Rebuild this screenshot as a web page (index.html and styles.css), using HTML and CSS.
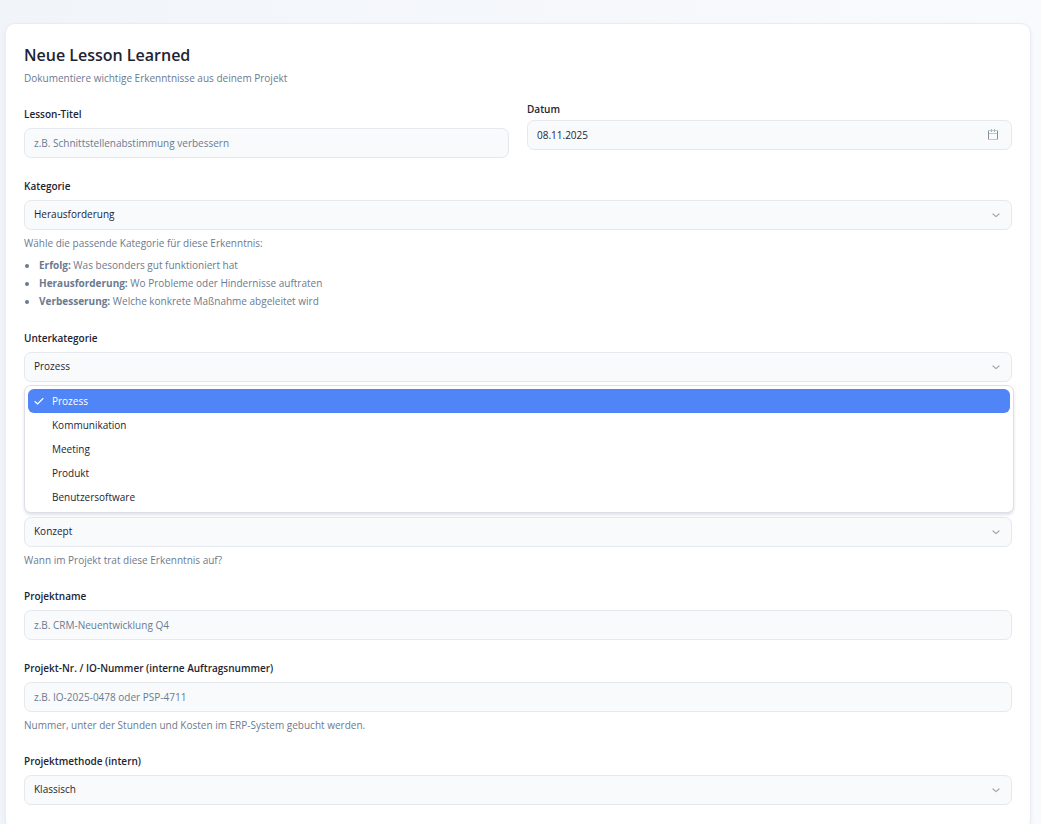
FILE: index.html
```html
<!DOCTYPE html>
<html lang="de">
  <head>
    <meta charset="UTF-8" />
    <meta name="viewport" content="width=device-width, initial-scale=1.0" />
    <title>Neue Lesson Learned</title>
    <link rel="stylesheet" href="styles.css">
  </head>
  <body>
    <svg class="sprite" aria-hidden="true">
      <symbol id="chevron" viewBox="0 0 12 12">
        <path d="M3 5l3 2.6L9 5" fill="none" stroke="currentColor" stroke-width="1.2" stroke-linecap="round" stroke-linejoin="round" />
      </symbol>
    </svg>
    <main class="card">
      <header class="card-header">
        <h1>Neue Lesson Learned</h1>
        <p>Dokumentiere wichtige Erkenntnisse aus deinem Projekt</p>
      </header>
      <form class="lesson-form">
        <div class="row">
          <div class="field">
            <label for="title">Lesson-Titel</label>
            <input type="text" id="title" placeholder="z.B. Schnittstellenabstimmung verbessern" />
          </div>
          <div class="field date-field">
            <label for="date">Datum</label>
            <div class="control">
              <input type="text" id="date" value="08.11.2025" />
              <button type="button" class="calendar-button" aria-label="Kalender">
                <svg width="12" height="12" viewBox="0 0 12 12" fill="none">
                  <path d="M1 1.5h10M1 4.5h10M1 10.5h10" stroke="#b4cdc6" />
                  <path d="M1.5 2v8M10.5 2v8" stroke="#8f8a98" />
                  <path d="M4.5 0v3M7.5 0v3" stroke="#adb3b8" />
                </svg>
              </button>
            </div>
          </div>
        </div>

        <div class="field">
          <label for="category">Kategorie</label>
          <div class="control">
            <select id="category">
              <option>Herausforderung</option>
            </select>
            <svg class="chevron"><use href="#chevron" /></svg>
          </div>
          <p class="hint">Wähle die passende Kategorie für diese Erkenntnis:</p>
          <ul class="hint-list">
            <li><strong>Erfolg:</strong> Was besonders gut funktioniert hat</li>
            <li><strong>Herausforderung:</strong> Wo Probleme oder Hindernisse auftraten</li>
            <li><strong>Verbesserung:</strong> Welche konkrete Maßnahme abgeleitet wird</li>
          </ul>
        </div>

        <div class="field">
          <label for="subcategory">Unterkategorie</label>
          <div class="control">
            <select id="subcategory">
              <option>Prozess</option>
            </select>
            <svg class="chevron"><use href="#chevron" /></svg>
          </div>
          <ul class="menu" role="listbox" aria-label="Unterkategorie">
            <li class="selected" role="option" aria-selected="true">
              <svg class="check" width="10" height="10" viewBox="0 0 10 10" fill="none">
                <path d="M1 5.5L3.5 8 9 2.5" stroke="currentColor" stroke-width="1.1" stroke-linecap="round" stroke-linejoin="round" />
              </svg>
              Prozess
            </li>
            <li role="option">Kommunikation</li>
            <li role="option">Meeting</li>
            <li role="option">Produkt</li>
            <li role="option">Benutzersoftware</li>
          </ul>
          <div class="control">
            <select id="phase" aria-label="Projektphase">
              <option>Konzept</option>
            </select>
            <svg class="chevron"><use href="#chevron" /></svg>
          </div>
          <p class="hint">Wann im Projekt trat diese Erkenntnis auf?</p>
        </div>

        <div class="field">
          <label for="project">Projektname</label>
          <input type="text" id="project" placeholder="z.B. CRM-Neuentwicklung Q4" />
        </div>

        <div class="field">
          <label for="number">Projekt-Nr. / IO-Nummer (interne Auftragsnummer)</label>
          <input type="text" id="number" placeholder="z.B. IO-2025-0478 oder PSP-4711" />
          <p class="hint">Nummer, unter der Stunden und Kosten im ERP-System gebucht werden.</p>
        </div>

        <div class="field">
          <label for="method">Projektmethode (intern)</label>
          <div class="control">
            <select id="method">
              <option>Klassisch</option>
            </select>
            <svg class="chevron"><use href="#chevron" /></svg>
          </div>
        </div>
      </form>
    </main>
  </body>
</html>
```
FILE: styles.css
```css
* {
  box-sizing: border-box;
}

body {
  margin: 0;
  padding: 23px 10px 0 5px;
  font-family: "Segoe UI", "Open Sans", "Noto Sans", sans-serif;
  font-size: 10px;
  color: #1d2433;
  background: linear-gradient(to right, #f1f5fa, #f9fafd);
}

h1,
p,
ul {
  margin: 0;
  padding: 0;
}

.sprite {
  position: absolute;
  width: 0;
  height: 0;
}

.card {
  padding: 18px 18px 24px;
  background: #fff;
  border: 1px solid #e9edf3;
  border-radius: 10px;
  box-shadow: 0 2px 4px rgba(60, 80, 160, 0.08);
}

.card-header {
  margin-bottom: 16px;
}

.card-header h1 {
  margin-bottom: 2px;
  font-size: 16px;
  font-weight: 600;
  line-height: 26px;
}

.card-header p,
.hint {
  line-height: 16px;
  color: #6b7a90;
}

.lesson-form {
  display: flex;
  flex-direction: column;
  gap: 16px;
}

.row {
  display: grid;
  grid-template-columns: 1fr 1fr;
  gap: 18px;
}

.field {
  display: flex;
  flex-direction: column;
}

.field label {
  margin-bottom: 2px;
  font-weight: 600;
  line-height: 24px;
}

.date-field label {
  margin-bottom: 4px;
  line-height: 14px;
}

.control {
  position: relative;
}

input,
select {
  display: block;
  width: 100%;
  height: 30px;
  padding: 0 9px;
  font: inherit;
  color: inherit;
  background: #f8fafc;
  border: 1px solid #e5e9ee;
  border-radius: 7px;
  outline: none;
  appearance: none;
}

select {
  padding-bottom: 2px;
}

input::placeholder {
  color: #6b7a90;
  opacity: 1;
}

.chevron {
  position: absolute;
  top: 9px;
  right: 10px;
  width: 12px;
  height: 12px;
  color: #a3a6ab;
  pointer-events: none;
}

.calendar-button {
  position: absolute;
  top: 9px;
  right: 13px;
  display: flex;
  padding: 0;
  background: none;
  border: none;
  cursor: pointer;
}

.hint {
  margin-top: 5px;
}

.hint-list {
  margin-top: 5px;
  padding-left: 15px;
  line-height: 18px;
  color: #6b7a90;
}

.menu {
  margin: 3px -2px 4px 0;
  padding: 3px;
  list-style: none;
  background: #fff;
  border: 1px solid #dcdfea;
  border-radius: 7px;
  box-shadow: 0 2px 3px rgba(40, 50, 90, 0.14);
}

.menu li {
  position: relative;
  padding-left: 24px;
  line-height: 24px;
  border-radius: 6px;
}

.menu .selected {
  color: #fff;
  background: #5085f7;
}

.check {
  position: absolute;
  top: 7px;
  left: 6px;
}
```
